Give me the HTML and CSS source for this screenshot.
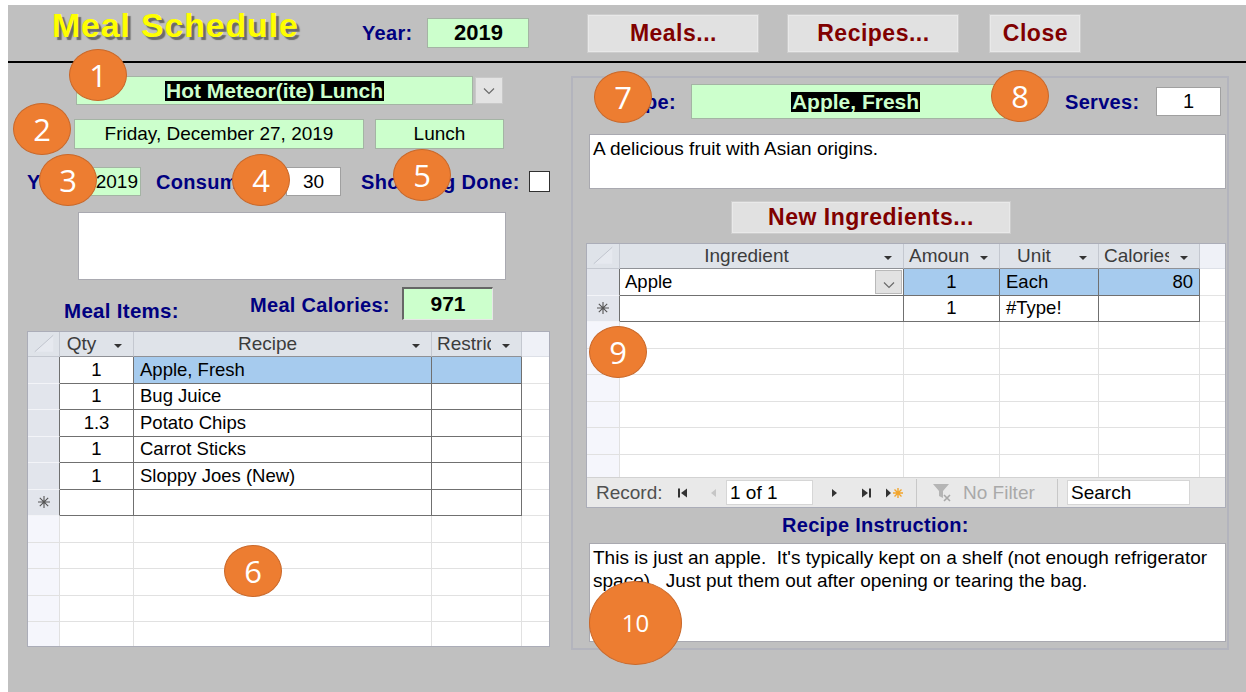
FILE: index.html
```html
<!DOCTYPE html>
<html lang="en">
<head>
<meta charset="utf-8">
<title>Meal Schedule</title>
<link rel="stylesheet" href="styles.css">
</head>
<body>
<div class="window">
  <header class="topbar">
    <h1 class="title">Meal Schedule</h1>
    <span class="lbl">Year:</span>
    <div class="fld fld-year">2019</div>
    <button class="btn btn-meals">Meals...</button>
    <button class="btn btn-recipes">Recipes...</button>
    <button class="btn btn-close">Close</button>
  </header>

  <div class="main">
    <section class="left">
      <div class="combo">
        <div class="fld combo-field"><span class="sel-text">Hot Meteor(ite) Lunch</span></div>
        <div class="combo-btn">
          <svg width="12" height="8" viewBox="0 0 12 8"><polyline points="1,1.5 6,6.5 11,1.5" fill="none" stroke="#6b6b6b" stroke-width="1.2"/></svg>
        </div>
      </div>

      <div class="row-date">
        <div class="fld fld-date">Friday, December 27, 2019</div>
        <div class="fld fld-lunch">Lunch</div>
      </div>

      <div class="row-info">
        <span class="lbl lbl-year">Year:</span>
        <div class="fld fld-yr">2019</div>
        <span class="lbl lbl-cons">Consumers:</span>
        <div class="box box-cons">30</div>
        <span class="lbl lbl-shop">Shopping Done:</span>
        <span class="check"></span>
      </div>

      <div class="memo"></div>

      <div class="row-cal">
        <span class="lbl lbl-items">Meal Items:</span>
        <span class="lbl lbl-cal">Meal Calories:</span>
        <div class="cal-box">971</div>
      </div>

      <div class="dg dg-meal">
        <div class="dg-head">
          <div class="hc hc-sel">
            <svg width="32" height="24" viewBox="0 0 32 24"><polygon points="7,20 26,3 26,20" fill="#e6e9ef"/><line x1="7" y1="20" x2="26" y2="3" stroke="#bfc3cc" stroke-width="1"/></svg>
          </div>
          <div class="hc"><span class="ht">Qty</span><span class="ha"></span></div>
          <div class="hc"><span class="ht">Recipe</span><span class="ha"></span></div>
          <div class="hc"><span class="ht ht-left">Restrictions</span><span class="ha"></span></div>
          <div class="hc hc-x"></div>
        </div>
        <div class="dr">
          <div class="c c-sel"></div>
          <div class="c c-num">1</div>
          <div class="c c-hl">Apple, Fresh</div>
          <div class="c c-hl"></div>
          <div class="c c-x"></div>
        </div>
        <div class="dr">
          <div class="c c-sel"></div>
          <div class="c c-num">1</div>
          <div class="c">Bug Juice</div>
          <div class="c"></div>
          <div class="c c-x"></div>
        </div>
        <div class="dr">
          <div class="c c-sel"></div>
          <div class="c c-num">1.3</div>
          <div class="c">Potato Chips</div>
          <div class="c"></div>
          <div class="c c-x"></div>
        </div>
        <div class="dr">
          <div class="c c-sel"></div>
          <div class="c c-num">1</div>
          <div class="c">Carrot Sticks</div>
          <div class="c"></div>
          <div class="c c-x"></div>
        </div>
        <div class="dr">
          <div class="c c-sel"></div>
          <div class="c c-num">1</div>
          <div class="c">Sloppy Joes (New)</div>
          <div class="c"></div>
          <div class="c c-x"></div>
        </div>
        <div class="dr">
          <div class="c c-sel">
            <svg width="14" height="14" viewBox="0 0 14 14"><path d="M7 1V13M1 7H13M2.8 2.8L11.2 11.2M11.2 2.8L2.8 11.2" stroke="#555" stroke-width="1.1"/></svg>
          </div>
          <div class="c"></div>
          <div class="c"></div>
          <div class="c"></div>
          <div class="c c-x"></div>
        </div>
        <div class="er"><div class="ec ec-sel"></div><div class="ec"></div><div class="ec"></div><div class="ec"></div><div class="ec"></div></div>
        <div class="er"><div class="ec ec-sel"></div><div class="ec"></div><div class="ec"></div><div class="ec"></div><div class="ec"></div></div>
        <div class="er"><div class="ec ec-sel"></div><div class="ec"></div><div class="ec"></div><div class="ec"></div><div class="ec"></div></div>
        <div class="er"><div class="ec ec-sel"></div><div class="ec"></div><div class="ec"></div><div class="ec"></div><div class="ec"></div></div>
        <div class="er"><div class="ec ec-sel"></div><div class="ec"></div><div class="ec"></div><div class="ec"></div><div class="ec"></div></div>
      </div>
    </section>

    <section class="panel">
      <div class="row-recipe">
        <span class="lbl lbl-recipe">Recipe:</span>
        <div class="fld fld-recipe"><span class="sel-text">Apple, Fresh</span></div>
        <span class="lbl lbl-serves">Serves:</span>
        <div class="box box-serves">1</div>
      </div>

      <div class="txt txt-desc">A delicious fruit with Asian origins.</div>

      <button class="btn btn-ingr">New Ingredients...</button>

      <div class="dg dg-ing">
        <div class="dg-head">
          <div class="hc hc-sel">
            <svg width="33" height="24" viewBox="0 0 33 24"><polygon points="7,20 26,3 26,20" fill="#e6e9ef"/><line x1="7" y1="20" x2="26" y2="3" stroke="#bfc3cc" stroke-width="1"/></svg>
          </div>
          <div class="hc"><span class="ht">Ingredient</span><span class="ha"></span></div>
          <div class="hc"><span class="ht ht-left">Amount</span><span class="ha"></span></div>
          <div class="hc"><span class="ht">Unit</span><span class="ha"></span></div>
          <div class="hc"><span class="ht ht-left">Calories</span><span class="ha"></span></div>
          <div class="hc hc-x"></div>
        </div>
        <div class="dr">
          <div class="c c-sel"></div>
          <div class="c c-drop">
            <span class="c-text">Apple</span>
            <span class="cell-btn"><svg width="12" height="8" viewBox="0 0 12 8"><polyline points="1,1.5 6,6.5 11,1.5" fill="none" stroke="#6b6b6b" stroke-width="1.2"/></svg></span>
          </div>
          <div class="c c-num c-hl">1</div>
          <div class="c c-hl">Each</div>
          <div class="c c-r c-hl">80</div>
          <div class="c c-x"></div>
        </div>
        <div class="dr">
          <div class="c c-sel">
            <svg width="14" height="14" viewBox="0 0 14 14"><path d="M7 1V13M1 7H13M2.8 2.8L11.2 11.2M11.2 2.8L2.8 11.2" stroke="#555" stroke-width="1.1"/></svg>
          </div>
          <div class="c"></div>
          <div class="c c-num">1</div>
          <div class="c">#Type!</div>
          <div class="c"></div>
          <div class="c c-x"></div>
        </div>
        <div class="dg-fill">
          <div class="er"><div class="ec ec-sel"></div><div class="ec"></div><div class="ec"></div><div class="ec"></div><div class="ec"></div><div class="ec"></div></div>
          <div class="er"><div class="ec ec-sel"></div><div class="ec"></div><div class="ec"></div><div class="ec"></div><div class="ec"></div><div class="ec"></div></div>
          <div class="er"><div class="ec ec-sel"></div><div class="ec"></div><div class="ec"></div><div class="ec"></div><div class="ec"></div><div class="ec"></div></div>
          <div class="er"><div class="ec ec-sel"></div><div class="ec"></div><div class="ec"></div><div class="ec"></div><div class="ec"></div><div class="ec"></div></div>
          <div class="er"><div class="ec ec-sel"></div><div class="ec"></div><div class="ec"></div><div class="ec"></div><div class="ec"></div><div class="ec"></div></div>
          <div class="er"><div class="ec ec-sel"></div><div class="ec"></div><div class="ec"></div><div class="ec"></div><div class="ec"></div><div class="ec"></div></div>
        </div>
        <div class="nav">
          <span class="nav-lbl">Record:</span>
          <svg class="nv nv-first" width="12" height="12" viewBox="0 0 12 12"><rect x="1" y="1.5" width="2" height="9" fill="#333"/><path d="M10 1.5L4 6L10 10.5Z" fill="#333"/></svg>
          <svg class="nv nv-prev" width="8" height="12" viewBox="0 0 8 12"><path d="M7 2L2 6L7 10Z" fill="#c6c6c6"/></svg>
          <span class="nav-box nav-pos">1 of 1</span>
          <svg class="nv nv-next" width="8" height="12" viewBox="0 0 8 12"><path d="M1 2L6 6L1 10Z" fill="#333"/></svg>
          <svg class="nv nv-last" width="12" height="12" viewBox="0 0 12 12"><path d="M2 1.5L8 6L2 10.5Z" fill="#333"/><rect x="9" y="1.5" width="2" height="9" fill="#333"/></svg>
          <svg class="nv nv-new" width="20" height="14" viewBox="0 0 20 14"><path d="M1 2.5L6 7L1 11.5Z" fill="#333"/><path d="M13 2V12M8 7H18M9.5 3.5L16.5 10.5M16.5 3.5L9.5 10.5" stroke="#f2a52c" stroke-width="1.4"/></svg>
          <span class="nav-sep"></span>
          <svg class="nv nv-filter" width="24" height="22" viewBox="0 0 24 22"><path d="M1 2H17L11 9V16L7 14V9Z" fill="#b5b5b5"/><path d="M12 13L18 19M18 13L12 19" stroke="#a8a8a8" stroke-width="1.6"/></svg>
          <span class="nav-nofilter">No Filter</span>
          <span class="nav-sep nav-sep2"></span>
          <span class="nav-box nav-search">Search</span>
        </div>
      </div>

      <span class="lbl lbl-instr">Recipe Instruction:</span>
      <div class="txt txt-instr">This is just an apple.&nbsp; It's typically kept on a shelf (not enough refrigerator space).&nbsp; Just put them out after opening or tearing the bag.</div>
    </section>
  </div>

  <span class="badge b1">1</span>
  <span class="badge b2">2</span>
  <span class="badge b3">3</span>
  <span class="badge b4">4</span>
  <span class="badge b5">5</span>
  <span class="badge b6">6</span>
  <span class="badge b7">7</span>
  <span class="badge b8">8</span>
  <span class="badge b9">9</span>
  <span class="badge b10">10</span>
</div>
</body>
</html>
```

FILE: styles.css
```css
* { box-sizing: border-box; }

body {
  margin: 0;
  background: #fff;
  font-family: "Liberation Sans", Arial, sans-serif;
  color: #000;
}

/* form surface */
.window {
  position: relative;
  margin: 5px 0 0 8px;
  width: 1238px;
  height: 687px;
  background: #c0c0c0;
  overflow: hidden;
}

/* ---------- header ---------- */
.topbar {
  height: 58px;
  border-bottom: 2px solid #000;
  display: flex;
  align-items: center;
  padding-left: 44px;
}

.title {
  margin: 3px 0 0;
  align-self: flex-start;
  width: 310px;
  font-size: 34px;
  line-height: 34px;
  font-weight: bold;
  letter-spacing: 0.8px;
  color: #ffff00;
  text-shadow: 3px 3px 1px #6a6a6a;
  white-space: nowrap;
}

.lbl {
  color: #000080;
  font-weight: bold;
  font-size: 20px;
  line-height: 20px;
  letter-spacing: 0.3px;
  white-space: nowrap;
}

.fld {
  background: #ccffcc;
  border: 1px solid #a4b4a4;
  display: flex;
  align-items: center;
  justify-content: center;
  font-size: 19px;
  white-space: nowrap;
}

.fld-year {
  margin-left: 15px;
  width: 102px;
  height: 30px;
  font-size: 22px;
  font-weight: bold;
}

.btn {
  height: 39px;
  padding: 0;
  background: #e1e1e1;
  border: 1px solid #cdcdcd;
  box-shadow: inset 0 0 0 1px #e9e9e9;
  color: #800000;
  font-family: "Liberation Sans", Arial, sans-serif;
  font-weight: bold;
  font-size: 23px;
  letter-spacing: 0.5px;
  display: flex;
  align-items: center;
  justify-content: center;
}
.btn-meals { margin-left: 58px; width: 172px; }
.btn-recipes { margin-left: 28px; width: 172px; }
.btn-close { margin-left: 30px; width: 92px; }

/* ---------- body ---------- */
.main {
  display: flex;
}

.left {
  width: 563px;
  padding-top: 13px;
  display: flex;
  flex-direction: column;
}

.combo {
  margin-left: 68px;
  display: flex;
  align-items: center;
  gap: 2px;
}
.combo-field {
  width: 397px;
  height: 29px;
}
.combo-btn {
  width: 28px;
  height: 27px;
  background: #e3e3e3;
  border: 1px solid #c9c9c9;
  display: flex;
  align-items: center;
  justify-content: center;
}

.sel-text {
  background: #000;
  color: #ccffcc;
  font-weight: bold;
  font-size: 21px;
  line-height: 20px;
  padding: 0 1px;
}

.row-date {
  margin-top: 14px;
  margin-left: 66px;
  display: flex;
  height: 30px;
}
.fld-date { width: 290px; }
.fld-lunch { width: 129px; margin-left: 11px; }

.row-info {
  margin-top: 18px;
  height: 29px;
  padding-left: 19px;
  display: flex;
  align-items: center;
}
.lbl-year { width: 50px; }
.fld-yr {
  margin-left: 11px;
  width: 53px;
  height: 29px;
  justify-content: flex-end;
  padding-right: 2px;
}
.lbl-cons { margin-left: 15px; width: 117px; }
.box {
  background: #fff;
  border: 1px solid #a0a0a0;
  display: flex;
  align-items: center;
  justify-content: center;
  font-size: 19px;
}
.box-cons { margin-left: 13px; width: 55px; height: 29px; }
.lbl-shop { margin-left: 20px; width: 166px; }
.check {
  margin-left: 2px;
  width: 21px;
  height: 21px;
  background: #fff;
  border: 1px solid #303030;
}

.memo {
  margin-top: 16px;
  margin-left: 70px;
  width: 428px;
  height: 68px;
  background: #fff;
  border: 1px solid #a9a9b0;
}

.row-cal {
  margin-top: 7px;
  height: 33px;
  display: flex;
  align-items: flex-start;
}
.lbl-items { margin-left: 56px; margin-top: 14px; width: 113px; font-size: 20.5px; }
.lbl-cal { margin-left: 73px; margin-top: 8px; width: 139px; }
.cal-box {
  margin-left: 13px;
  width: 91px;
  height: 33px;
  background: #ccffcc;
  border-top: 2px solid #666;
  border-left: 2px solid #666;
  border-right: 1px solid #e6e6e6;
  border-bottom: 1px solid #e6e6e6;
  display: flex;
  align-items: center;
  justify-content: center;
  font-weight: bold;
  font-size: 21px;
}

/* ---------- datasheets ---------- */
.dg {
  background: #fff;
  border: 1px solid #abadb8;
  overflow: hidden;
  display: flex;
  flex-direction: column;
}
.dg-meal {
  margin-top: 11px;
  margin-left: 19px;
  width: 523px;
  height: 316px;
}
.dg-meal .dg-head,
.dg-meal .dr,
.dg-meal .er {
  grid-template-columns: 32px 74px 298px 90px 1fr;
}

.dg-ing {
  margin-top: 9px;
  margin-left: 13px;
  width: 640px;
  height: 265px;
}
.dg-ing .dg-head,
.dg-ing .dr,
.dg-ing .er {
  grid-template-columns: 33px 284px 96px 99px 101px 1fr;
}

.dg-head {
  display: grid;
  height: 25px;
  flex: none;
  background: #dfe3e9;
}
.hc {
  display: flex;
  align-items: center;
  min-width: 0;
  border-right: 1px solid #c4c8d0;
  border-bottom: 1px solid #8f9196;
  color: #3c3c3c;
  font-size: 19px;
}
.hc-sel { border-bottom-color: #c4c8d0; }
.hc-x {
  background: #eff1f7;
  border-right: none;
  border-bottom-color: #dde0e7;
}
.ht {
  flex: 1;
  min-width: 0;
  text-align: center;
  overflow: hidden;
  white-space: nowrap;
}
.ht-left { text-align: left; padding-left: 5px; }
.ha {
  width: 30px;
  flex: none;
  display: flex;
  justify-content: center;
}
.ha::after {
  content: "";
  margin-top: 3px;
  border-left: 4px solid transparent;
  border-right: 4px solid transparent;
  border-top: 4px solid #333;
}

.dr {
  display: grid;
  height: 26.5px;
  flex: none;
}
.c {
  display: flex;
  align-items: center;
  min-width: 0;
  padding: 0 6px;
  border-right: 1px solid #707070;
  border-bottom: 1px solid #707070;
  font-size: 18.5px;
  white-space: nowrap;
  overflow: hidden;
}
.c-sel {
  padding: 0;
  justify-content: center;
  background: #e2e5ec;
  border-bottom-color: #f3f4f8;
}
.c-num { justify-content: center; }
.c-r { justify-content: flex-end; }
.c-hl { background: #a6cbee; }
.c-x {
  border-right: none;
  border-bottom-color: #e3e3e3;
}
.c-drop { padding: 0 1px 0 5px; }
.c-text { flex: 1; }
.cell-btn {
  width: 27px;
  height: 24px;
  background: #e2e2e2;
  border: 1px solid #b9b9b9;
  display: flex;
  align-items: flex-end;
  justify-content: center;
  padding-bottom: 4px;
}

.er {
  display: grid;
  height: 26.5px;
  flex: none;
}
.ec {
  border-right: 1px solid #e1e1e1;
  border-bottom: 1px solid #e1e1e1;
}
.ec:last-child { border-right: none; }
.ec-sel { background: #f5f6fc; }

.dg-fill {
  flex: 1;
  overflow: hidden;
}

/* record navigation bar */
.nav {
  height: 30px;
  flex: none;
  display: flex;
  align-items: center;
  background: #e9e9e9;
  border-top: 1px solid #d2d2d2;
  font-size: 19px;
}
.nav-lbl { margin-left: 9px; color: #505050; width: 68px; }
.nv { flex: none; }
.nv-first { margin-left: 13px; }
.nv-prev { margin-left: 20px; }
.nav-box {
  height: 25px;
  background: #fff;
  border: 1px solid #d6d6d6;
  display: flex;
  align-items: center;
  padding-left: 3px;
  color: #000;
}
.nav-pos { margin-left: 9px; width: 87px; }
.nv-next { margin-left: 18px; }
.nv-last { margin-left: 21px; }
.nv-new { margin-left: 13px; }
.nav-sep {
  margin-left: 11px;
  width: 1px;
  height: 28px;
  background: #c8c8c8;
}
.nv-filter { margin-left: 15px; }
.nav-nofilter { margin-left: 7px; color: #a9a9a9; width: 93px; }
.nav-sep2 { margin-left: 1px; }
.nav-search { margin-left: 9px; width: 123px; }

/* ---------- recipe panel ---------- */
.panel {
  margin-top: 13px;
  width: 658px;
  height: 574px;
  border: 2px solid #b3b4bd;
  display: flex;
  flex-direction: column;
  align-items: flex-start;
}

.row-recipe {
  margin-top: 6px;
  height: 35px;
  display: flex;
  align-items: center;
}
.lbl-recipe { width: 103px; text-align: right; }
.fld-recipe { margin-left: 15px; width: 329px; height: 35px; }
.lbl-serves { margin-left: 45px; width: 73px; }
.box-serves { margin-left: 18px; width: 65px; height: 29px; font-size: 20px; }

.txt {
  margin-left: 16px;
  width: 637px;
  background: #fff;
  border: 1px solid #a9a9b0;
  font-size: 19px;
  line-height: 23px;
  padding: 2px 3px;
}
.txt-desc { margin-top: 15px; height: 55px; }

.btn-ingr {
  margin-top: 12px;
  margin-left: 158px;
  width: 280px;
  height: 33px;
}

.lbl-instr {
  margin-top: 7px;
  margin-left: 209px;
  height: 20px;
}
.txt-instr { margin-top: 8px; height: 99px; }

/* ---------- numbered callouts ---------- */
.badge {
  position: absolute;
  width: 58px;
  height: 52px;
  border-radius: 50%;
  background: #ed7d31;
  border: 1px solid #c9682a;
  color: #fff;
  font-family: "Open Sans", "Noto Sans", sans-serif;
  font-size: 31px;
  line-height: 1;
  display: flex;
  align-items: center;
  justify-content: center;
}
.b1 { left: 61px; top: 44px; }
.b2 { left: 5px; top: 98px; }
.b3 { left: 31px; top: 149px; }
.b4 { left: 224px; top: 149px; }
.b5 { left: 385px; top: 144px; }
.b6 { left: 216px; top: 540px; }
.b7 { left: 586px; top: 66px; }
.b8 { left: 983px; top: 65px; }
.b9 { left: 581px; top: 321px; }
.b10 {
  left: 581px;
  top: 576px;
  width: 93px;
  height: 84px;
  font-size: 24px;
}
```
